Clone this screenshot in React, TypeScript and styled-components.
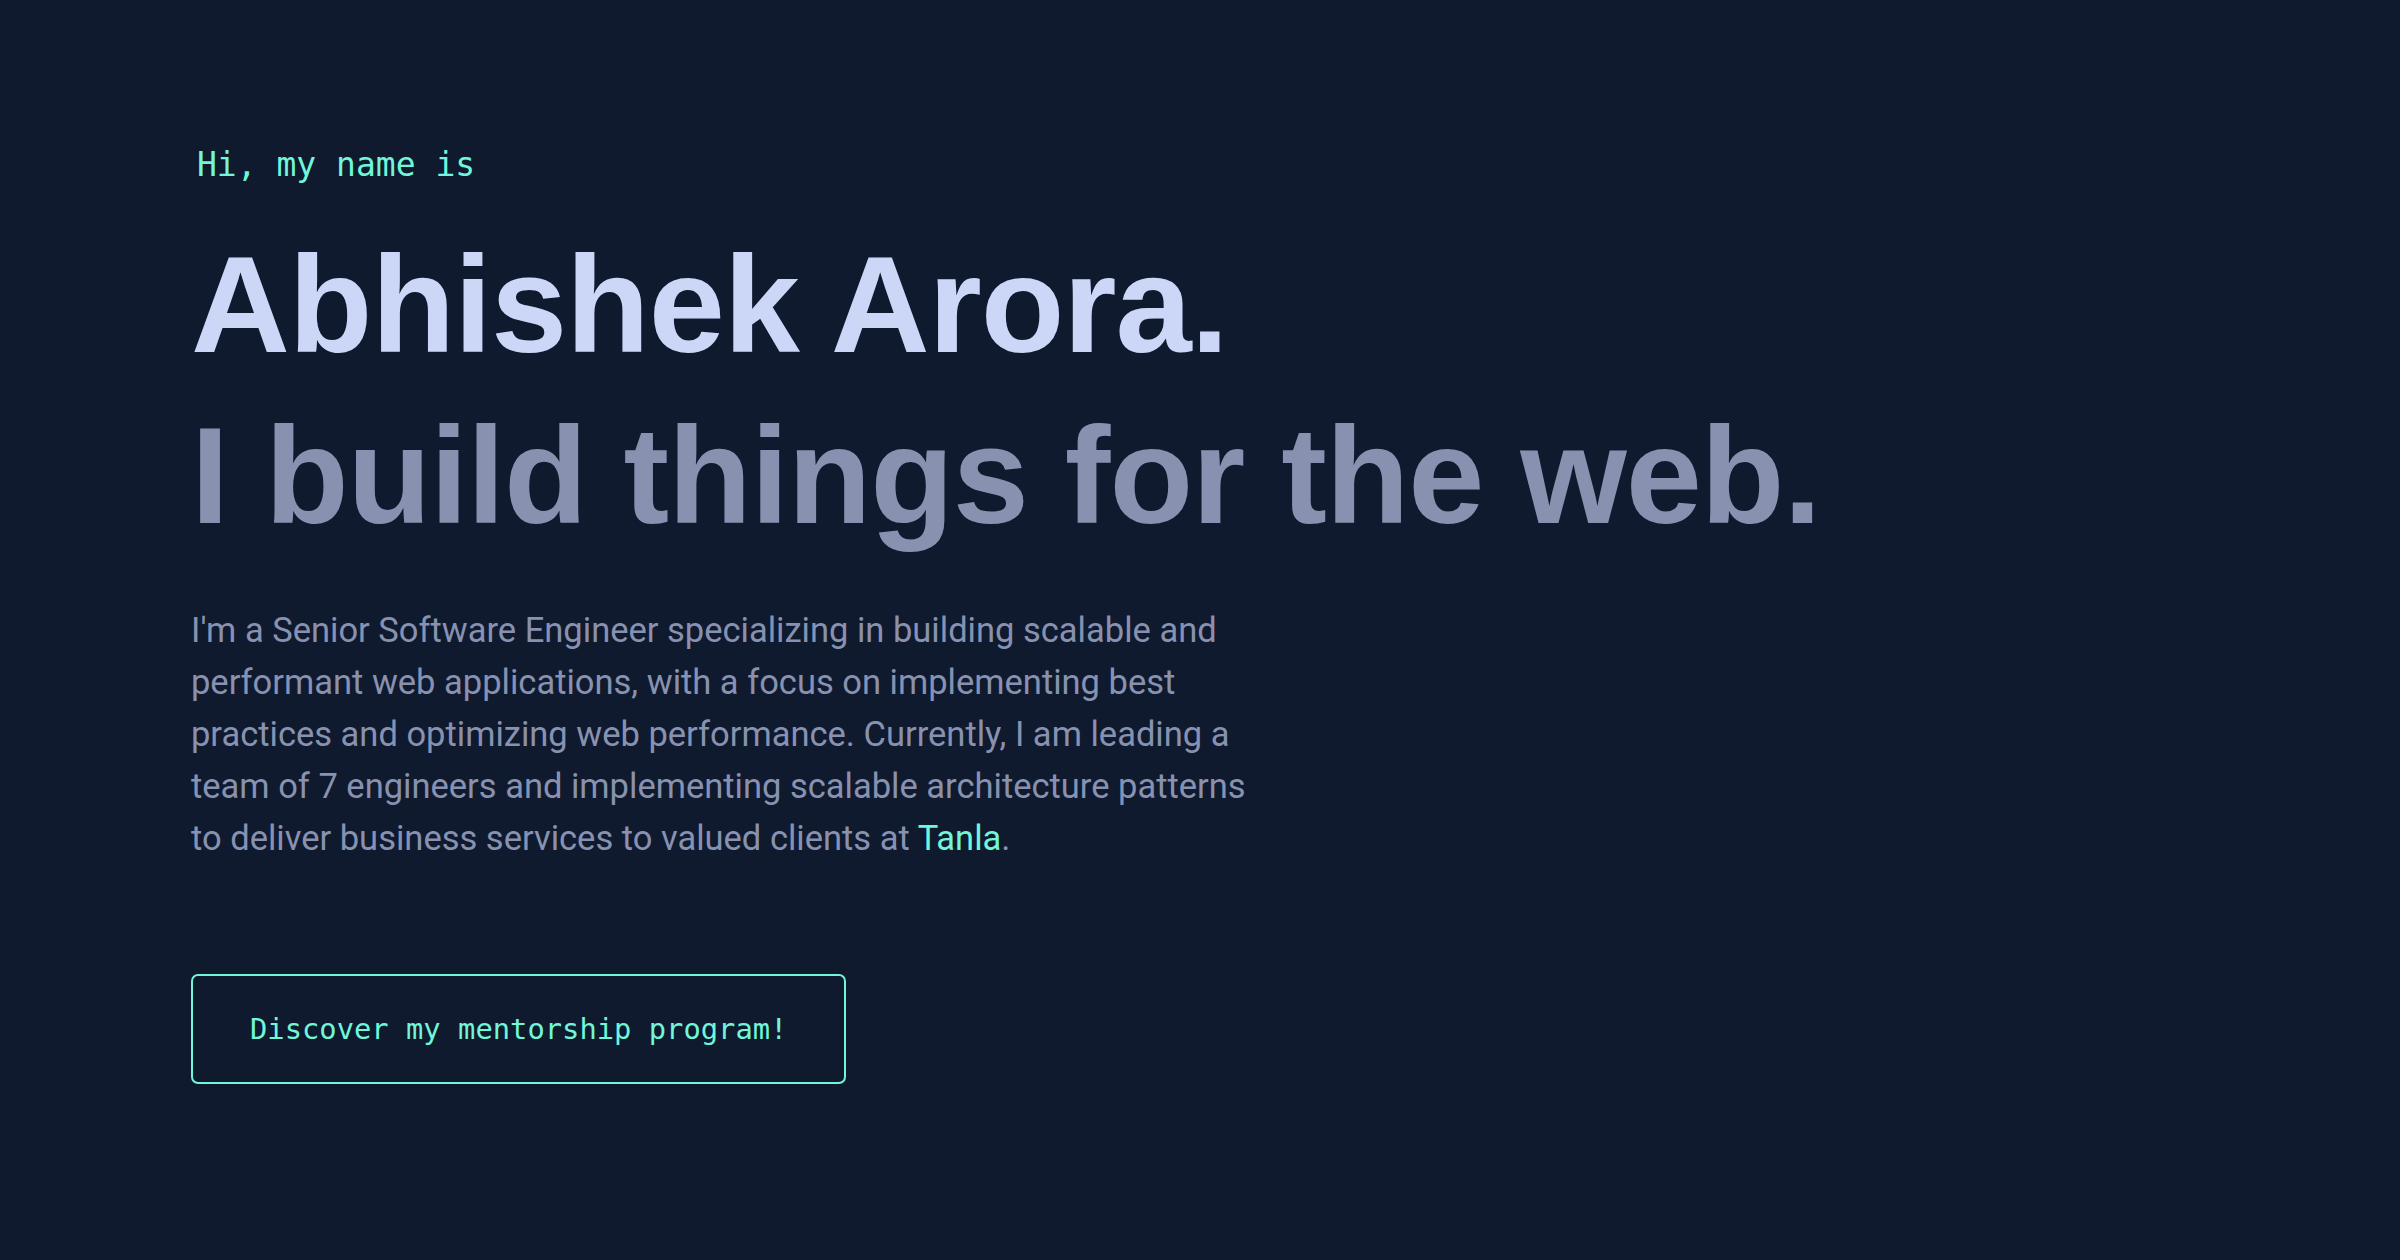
import React from "react";
import styled, { createGlobalStyle } from "styled-components";

const GlobalStyle = createGlobalStyle`
  html, body {
    margin: 0;
    padding: 0;
    background: #0f1a2f;
  }
  body {
    font-family: "Roboto", "Liberation Sans", sans-serif;
    -webkit-font-smoothing: antialiased;
  }
  * { box-sizing: border-box; }
`;

const Hero = styled.section`
  min-height: 1260px;
  display: flex;
  flex-direction: column;
  align-items: flex-start;
  padding: 148px 0 0 191px;
`;

const Intro = styled.h1`
  margin: 0 0 0 6px;
  font-family: "DejaVu Sans Mono", "Liberation Mono", monospace;
  font-weight: 400;
  font-size: 33px;
  line-height: 33px;
  color: #70f6d8;
`;

const BigTitle = styled.h2<{ $muted?: boolean; $top: number }>`
  margin: ${(p) => p.$top}px 0 0 0;
  font-family: "Liberation Sans", Arial, sans-serif;
  font-weight: 700;
  font-size: 137px;
  line-height: 1.1;
  letter-spacing: -1.1px;
  color: ${(p) => (p.$muted ? "#8892b0" : "#ccd6f6")};
  white-space: nowrap;
`;

const Bio = styled.p`
  margin: 53px 0 0 0;
  max-width: 1075px;
  font-family: "Roboto", "Liberation Sans", sans-serif;
  font-weight: 400;
  font-size: 34.5px;
  line-height: 52px;
  color: #8892b0;
`;

const Highlight = styled.a`
  color: #70f6d8;
  text-decoration: none;
`;

const OutlineButton = styled.a`
  margin-top: 110px;
  display: inline-flex;
  align-items: center;
  justify-content: center;
  height: 110px;
  padding: 0 57px;
  border: 2px solid #70f6d8;
  border-radius: 7px;
  font-family: "DejaVu Sans Mono", "Liberation Mono", monospace;
  font-size: 28.8px;
  line-height: 1;
  color: #70f6d8;
  text-decoration: none;
  white-space: nowrap;
`;

export default function App() {
  return (
    <>
      <GlobalStyle />
      <Hero>
        <Intro>Hi, my name is</Intro>
        <BigTitle $top={49}>Abhishek Arora.</BigTitle>
        <BigTitle $top={20} $muted>
          I build things for the web.
        </BigTitle>
        <Bio>
          I'm a Senior Software Engineer specializing in building scalable and
          performant web applications, with a focus on implementing best
          practices and optimizing web performance. Currently, I am leading a
          team of 7 engineers and implementing scalable architecture patterns
          to deliver business services to valued clients at{" "}
          <Highlight href="#">Tanla</Highlight>.
        </Bio>
        <OutlineButton href="#">Discover my mentorship program!</OutlineButton>
      </Hero>
    </>
  );
}
